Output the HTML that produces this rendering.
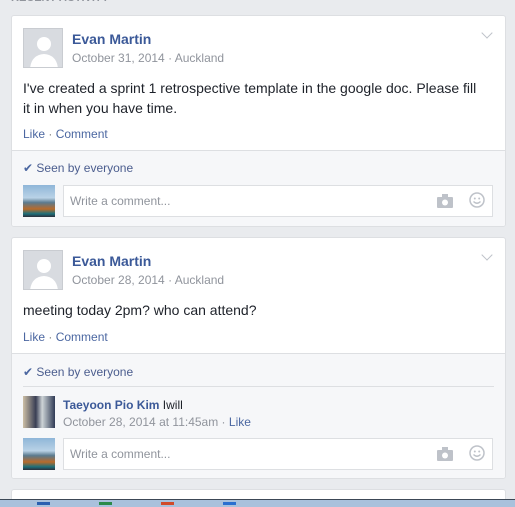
<!DOCTYPE html><html style="overflow:hidden;height:507px"><head><style>
body{margin:0;width:515px;height:507px;overflow:hidden;background:#e9ebee;font-family:"Liberation Sans",Arial,sans-serif;position:relative}
.a{position:absolute}
.card{position:absolute;left:11px;width:493px;background:#fff;border:1px solid #dddfe2;border-radius:3px;overflow:hidden}
.gray{position:absolute;left:0;right:0;background:#f6f7f9;border-top:1px solid #dddfe2}
.av{position:absolute;width:40px;height:40px;background:#d8dbe0;border:1px solid #c9ccd1;box-sizing:border-box;overflow:hidden}
.name{position:absolute;color:#3b5998;font-weight:bold;font-size:14px}
.date{position:absolute;color:#90949c;font-size:12px}
.txt{position:absolute;color:#1d2129;font-size:14px;line-height:20px}
.lk{position:absolute;color:#7f7f7f;font-size:12px}
.lk span{color:#4b67a1}
.seen{position:absolute;color:#4b5d8e;font-size:12px}
.pic{position:absolute;width:32px;height:32px;background:linear-gradient(#8fb6d8 0,#b9d2e6 40%,#5b7a8e 55%,#b86a2a 75%,#1c6f7a 90%,#2b2e3a 100%)}
.inp{position:absolute;width:428px;height:30px;background:#fff;border:1px solid #dddfe2;color:#90949c;font-size:12px;line-height:30px;box-sizing:content-box}
.inp b{font-weight:normal;padding-left:6px}
.chev{position:absolute;width:7px;height:7px;border-right:1.5px solid #bec2c9;border-bottom:1.5px solid #bec2c9;transform:rotate(45deg)}
</style></head><body>
<div class="a" style="left:11px;top:-8px;font-size:11px;font-weight:bold;color:#90949c">RECENT ACTIVITY</div>

<div class="card" style="top:15px;height:210px">
 <div class="av" style="left:11px;top:12px"><svg width="40" height="40"><circle cx="20" cy="15" r="7" fill="#fff"/><path d="M6 40 Q7 26 20 25 Q33 26 34 40Z" fill="#fff"/></svg></div>
 <div class="chev" style="left:471px;top:13px"></div>
 <div class="name" style="left:60px;top:15px">Evan Martin</div>
 <div class="date" style="left:60px;top:35px">October 31, 2014 · Auckland</div>
 <div class="txt" style="left:11px;top:62px;width:462px">I've created a sprint 1 retrospective template in the google doc. Please fill it in when you have time.</div>
 <div class="lk" style="left:11px;top:111px"><span>Like</span> · <span>Comment</span></div>
 <div class="gray" style="top:134px;height:80px">
  <div class="seen" style="left:11px;top:10px"><span style="color:#4b67a1">✔</span> Seen by everyone</div>
  <div class="pic" style="left:11px;top:34px"></div>
  <div class="inp" style="left:51px;top:34px"><b>Write a comment...</b>
   <svg class="a" style="left:373px;top:8px" width="16" height="14"><rect x="0" y="3" width="16" height="11" rx="1" fill="#bec2c9"/><rect x="5" y="0" width="6" height="4" fill="#bec2c9"/><circle cx="8" cy="8.5" r="3" fill="#fff"/></svg>
   <svg class="a" style="left:405px;top:6px" width="16" height="16"><circle cx="8" cy="8" r="7" fill="none" stroke="#bec2c9" stroke-width="1.5"/><circle cx="5.8" cy="6.5" r="1" fill="#bec2c9"/><circle cx="10.2" cy="6.5" r="1" fill="#bec2c9"/><path d="M4.5 9.5 Q8 13 11.5 9.5" fill="none" stroke="#bec2c9" stroke-width="1.3"/></svg>
  </div>
 </div>
</div>

<div class="card" style="top:237px;height:240px">
 <div class="av" style="left:11px;top:12px"><svg width="40" height="40"><circle cx="20" cy="15" r="7" fill="#fff"/><path d="M6 40 Q7 26 20 25 Q33 26 34 40Z" fill="#fff"/></svg></div>
 <div class="chev" style="left:471px;top:13px"></div>
 <div class="name" style="left:60px;top:15px">Evan Martin</div>
 <div class="date" style="left:60px;top:35px">October 28, 2014 · Auckland</div>
 <div class="txt" style="left:11px;top:62px">meeting today 2pm? who can attend?</div>
 <div class="lk" style="left:11px;top:92px"><span>Like</span> · <span>Comment</span></div>
 <div class="gray" style="top:115px;height:130px">
  <div class="seen" style="left:11px;top:11px"><span style="color:#4b67a1">✔</span> Seen by everyone</div>
  <div class="a" style="left:11px;right:11px;top:32px;height:1px;background:#dddfe2"></div>
  <div class="pic" style="left:11px;top:42px;background:linear-gradient(90deg,#cdbfa5,#3a3f55 40%,#cdd3d6 60%,#2f3a55)"></div>
  <div class="a" style="left:51px;top:44px;font-size:12px;color:#1d2129"><b style="color:#3b5998">Taeyoon Pio Kim</b> Iwill</div>
  <div class="a" style="left:51px;top:61px;font-size:12px;color:#90949c">October 28, 2014 at 11:45am · <span style="color:#4b67a1">Like</span></div>
  <div class="pic" style="left:11px;top:84px"></div>
  <div class="inp" style="left:51px;top:84px"><b>Write a comment...</b>
   <svg class="a" style="left:373px;top:8px" width="16" height="14"><rect x="0" y="3" width="16" height="11" rx="1" fill="#bec2c9"/><rect x="5" y="0" width="6" height="4" fill="#bec2c9"/><circle cx="8" cy="8.5" r="3" fill="#fff"/></svg>
   <svg class="a" style="left:405px;top:6px" width="16" height="16"><circle cx="8" cy="8" r="7" fill="none" stroke="#bec2c9" stroke-width="1.5"/><circle cx="5.8" cy="6.5" r="1" fill="#bec2c9"/><circle cx="10.2" cy="6.5" r="1" fill="#bec2c9"/><path d="M4.5 9.5 Q8 13 11.5 9.5" fill="none" stroke="#bec2c9" stroke-width="1.3"/></svg>
  </div>
 </div>
</div>

<div class="card" style="top:489px;height:12px;border-bottom:none"></div>
<div class="a" style="left:0;top:499px;width:515px;height:7px;background:#a9c1dc;border-top:1px solid #3c4856"></div>
<div class="a" style="left:37px;top:502px;width:13px;height:3px;background:#2a5fb0"></div>
<div class="a" style="left:99px;top:502px;width:13px;height:3px;background:#2a8a4a"></div>
<div class="a" style="left:161px;top:502px;width:13px;height:3px;background:#d04a2a"></div>
<div class="a" style="left:223px;top:502px;width:13px;height:3px;background:#2a6fd0"></div>
</body></html>
